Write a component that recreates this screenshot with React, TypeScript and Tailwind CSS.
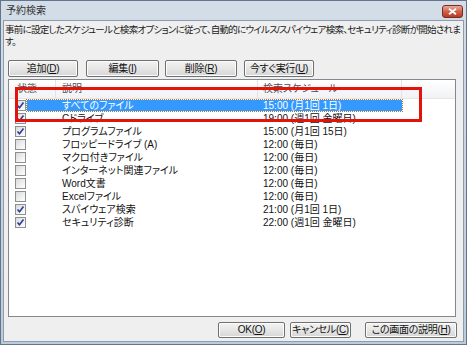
import React from "react";

type Row = { on: boolean; name: string; sched: string; sel?: boolean };

const rows: Row[] = [
  { on: true, name: "すべてのファイル", sched: "15:00 (月1回 1日)", sel: true },
  { on: true, name: "Cドライブ", sched: "19:00 (週1回 金曜日)" },
  { on: true, name: "プログラムファイル", sched: "15:00 (月1回 15日)" },
  { on: false, name: "フロッピードライブ (A)", sched: "12:00 (毎日)" },
  { on: false, name: "マクロ付きファイル", sched: "12:00 (毎日)" },
  { on: false, name: "インターネット関連ファイル", sched: "12:00 (毎日)" },
  { on: false, name: "Word文書", sched: "12:00 (毎日)" },
  { on: false, name: "Excelファイル", sched: "12:00 (毎日)" },
  { on: true, name: "スパイウェア検索", sched: "21:00 (月1回 1日)" },
  { on: true, name: "セキュリティ診断", sched: "22:00 (週1回 金曜日)" },
];

function Btn({ label, keyChar, w, className = "" }: { label: string; keyChar: string; w: string; className?: string }) {
  return (
    <button
      className={`${w} h-full flex items-center justify-center whitespace-nowrap rounded-[2px] border border-[#707070] bg-gradient-to-b from-[#f3f3f3] via-[#e6e6e6] to-[#d6d6d6] text-[10px] tracking-[-0.3px] text-[#111] leading-none shadow-[inset_0_0_0_1px_#fcfcfc] ${className}`}
    >
      {label}(<span className="underline">{keyChar}</span>)
    </button>
  );
}

function Check({ on }: { on: boolean }) {
  return (
    <span className="w-[11px] h-[11px] shrink-0 border border-[#8e8f8f] bg-gradient-to-br from-[#d9d9d9] via-[#ededed] to-[#ffffff] flex items-center justify-center">
      {on && (
        <svg width="9" height="9" viewBox="0 0 9 9">
          <path d="M1.5 4.5 L3.5 6.8 L7.5 1.5" fill="none" stroke="#243f99" strokeWidth="1.6" />
        </svg>
      )}
    </span>
  );
}

export default function App() {
  return (
    <div className="w-[467px] h-[345px] relative flex flex-col bg-gradient-to-b from-[#d3dde8] to-[#bccbdb] border border-[#64748a] font-['Liberation_Sans','Noto_Sans_CJK_JP',sans-serif] [font-feature-settings:'palt'] text-[#1a1a1a] overflow-hidden">
      {/* title bar */}
      <div className="h-[19px] shrink-0 flex items-center pl-[5px] pr-[3px]">
        <span className="text-[10px] leading-none text-[#333]">予約検索</span>
        <span className="ml-auto mt-[1px] w-[21px] h-[13px] rounded-[3px] border border-[#7a2c22] bg-gradient-to-b from-[#e9aa9c] via-[#d3604c] to-[#b53a28] flex items-center justify-center">
          <svg width="9" height="7" viewBox="0 0 9 7">
            <path d="M1 0.8 L8 6.2 M8 0.8 L1 6.2" stroke="#fff" strokeWidth="1.8" />
          </svg>
        </span>
      </div>

      {/* body */}
      <div className="flex-1 mx-[2px] mb-[3px] bg-[#efefef] border border-[#8d9cab] flex flex-col pb-[3px]">
        <div className="pl-[1px] pt-[3px] text-[9.5px] leading-[12px] tracking-[-0.72px] whitespace-nowrap">
          <div>事前に設定したスケジュールと検索オプションに従って、自動的にウイルス/スパイウェア検索、セキュリティ診断が開始されま</div>
          <div>す。</div>
        </div>

        <div className="mt-[12px] h-[17px] flex pl-[4px]">
          <Btn label="追加" keyChar="D" w="w-[70px]" />
          <Btn label="編集" keyChar="I" w="w-[73px]" className="ml-[8px]" />
          <Btn label="削除" keyChar="R" w="w-[72px]" className="ml-[6px]" />
          <Btn label="今すぐ実行" keyChar="U" w="w-[70px]" className="ml-[7px]" />
        </div>

        {/* list */}
        <div className="mt-[2px] ml-[4px] w-[448px] h-[238px] bg-white border border-[#828790] flex flex-col text-[10px] leading-none">
          <div className="h-[19px] shrink-0 flex bg-gradient-to-b from-[#ffffff] to-[#f1f2f4] border-b border-[#e5e5e5] text-[#4d4d4d]">
            <div className="w-[47px] pl-[8px] flex items-center border-r border-[#e3e3e3]">状態</div>
            <div className="w-[202px] pl-[6px] flex items-center border-r border-[#e3e3e3]">説明</div>
            <div className="w-[144px] pl-[5px] flex items-center border-r border-[#e3e3e3]">検索スケジュール</div>
            <div className="flex-1" />
          </div>
          {rows.map((r) => (
            <div key={r.name} className="h-[13px] flex items-center">
              <span className="ml-[6px]">
                <Check on={r.on} />
              </span>
              <div
                className={`ml-[1px] w-[375px] h-[11px] flex items-center pl-[35px] whitespace-nowrap ${
                  r.sel ? "bg-[#3399ff] text-white outline outline-1 outline-dotted outline-[#b7743a]" : "text-[#111]"
                }`}
              >
                <span className="w-[201px]">{r.name}</span>
                <span>{r.sched}</span>
              </div>
            </div>
          ))}
        </div>

        <div className="mt-[5px] h-[16px] flex">
          <Btn label="OK" keyChar="O" w="w-[67px]" className="ml-[214px]" />
          <Btn label="キャンセル" keyChar="C" w="w-[61px]" className="ml-[5px]" />
          <Btn label="この画面の説明" keyChar="H" w="w-[92px]" className="ml-[14px]" />
        </div>
      </div>

      {/* red annotation box */}
      <div className="absolute left-[14px] top-[86px] w-[407px] h-[35px] border-[3px] border-[#e3120b] pointer-events-none" />
    </div>
  );
}
